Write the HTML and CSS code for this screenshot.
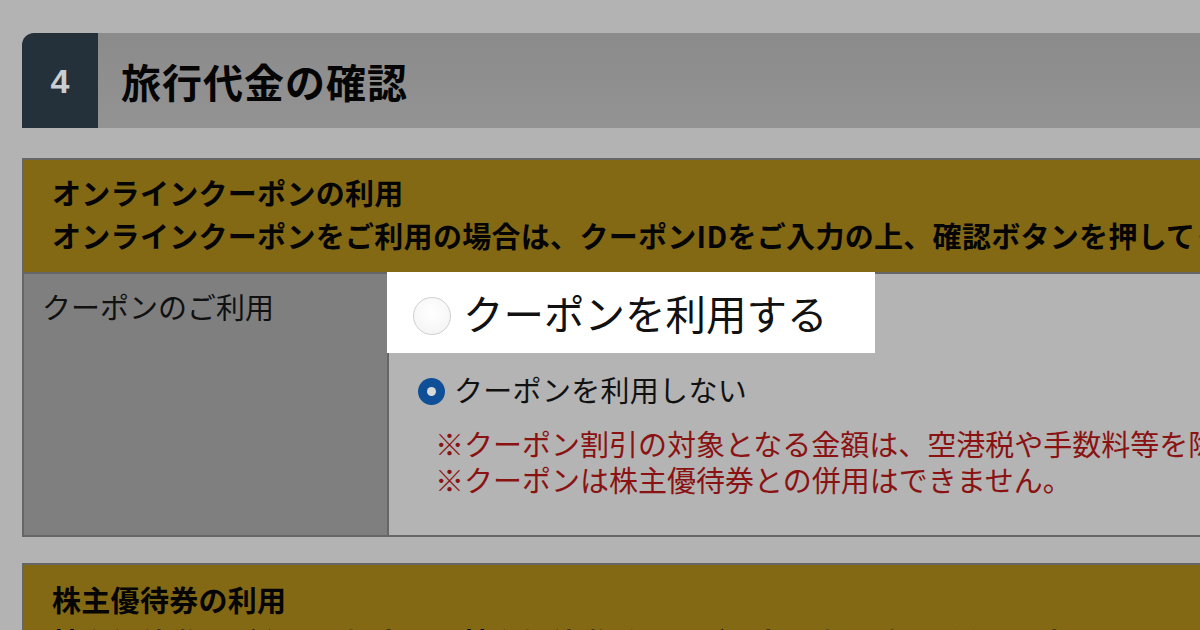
FILE: index.html
```html
<!DOCTYPE html>
<html lang="ja">
<head>
<meta charset="utf-8">
<title>旅行代金の確認</title>
<link rel="stylesheet" href="styles.css">
</head>
<body>
<div class="page">
  <div class="step-header">
    <div class="step-num">4</div>
    <div class="step-title">旅行代金の確認</div>
  </div>

  <div class="section">
    <div class="sec-head">
      <div>オンラインクーポンの利用</div>
      <div>オンラインクーポンをご利用の場合は、クーポンIDをご入力の上、確認ボタンを押してください。</div>
    </div>
    <div class="row">
      <div class="row-label">クーポンのご利用</div>
      <div class="row-body">
        <div class="opt-highlight">
          <span class="radio-big"></span>
          <span class="opt-big-text">クーポンを利用する</span>
        </div>
        <div class="opt">
          <span class="radio-on"></span>
          <span class="opt-text">クーポンを利用しない</span>
        </div>
        <div class="notes">
          <div>※クーポン割引の対象となる金額は、空港税や手数料等を除いた金額となります。</div>
          <div>※クーポンは株主優待券との併用はできません。</div>
        </div>
      </div>
    </div>
  </div>

  <div class="section section-2">
    <div class="sec-head sec-head-2">
      <div>株主優待券の利用</div>
      <div>株主優待券をご利用の場合は、株主優待券番号をご入力の上、確認ボタンを押してください。</div>
    </div>
  </div>
</div>
</body>
</html>
```

FILE: styles.css
```css
html, body {
  margin: 0;
  padding: 0;
}
body {
  width: 1200px;
  height: 630px;
  overflow: hidden;
  background: #b3b3b3;
  font-family: "Noto Sans CJK JP", "Noto Sans", sans-serif;
  color: #111;
}
.page {
  padding: 33px 0 0 22px;
  width: 1300px;
}
.step-header {
  display: flex;
  height: 95px;
}
.step-num {
  width: 76px;
  background: #25313a;
  border-top-left-radius: 12px;
  color: #c9ced2;
  font-family: "Liberation Sans", Arial, sans-serif;
  font-weight: 700;
  font-size: 34px;
  display: flex;
  align-items: center;
  justify-content: center;
  padding-top: 2px;
  box-sizing: border-box;
}
.step-title {
  flex: 1;
  background: linear-gradient(#8b8b8b, #939393);
  display: flex;
  align-items: center;
  padding-left: 23px;
  font-size: 40px;
  font-weight: 700;
  color: #050505;
  letter-spacing: 1px;
}
.section {
  margin-top: 30px;
  border: 2px solid #666;
  border-right: none;
  white-space: nowrap;
}
.sec-head {
  background: #846914;
  padding: 11px 0 15px 28px;
  font-size: 29px;
  letter-spacing: 0.3px;
  font-weight: 700;
  line-height: 43px;
  color: #050505;
}
.row {
  display: flex;
  border-top: 2px solid #666;
}
.row-label {
  flex: none;
  background: #7f7f7f;
  border-right: 2px solid #666;
  padding: 12px 0 0 18px;
  box-sizing: border-box;
  width: 365px;
  font-size: 29px;
  line-height: 40px;
  color: #111;
}
.row-body {
  flex: 1;
  background: #b4b4b4;
  padding-bottom: 38px;
}
.opt-highlight {
  position: relative;
  z-index: 1;
  margin: -2px 0 0 -2px;
  width: 488px;
  height: 81px;
  background: #fff;
  display: flex;
  align-items: center;
  padding-left: 26px;
  box-sizing: border-box;
  gap: 12px;
}
.radio-big {
  width: 38px;
  height: 38px;
  border-radius: 50%;
  border: 1.5px solid #cfcfcf;
  background: radial-gradient(circle at 50% 40%, #fff, #f2f2f2);
  box-sizing: border-box;
  flex: none;
  margin-top: 6px;
}
.opt-big-text {
  font-size: 40.5px;
  line-height: 50px;
  color: #111;
}
.opt {
  display: flex;
  align-items: center;
  margin-top: 17px;
  height: 38px;
  padding-left: 29px;
  gap: 9px;
}
.radio-on {
  width: 27px;
  height: 27px;
  border-radius: 50%;
  background: #0e4f98;
  box-sizing: border-box;
  flex: none;
  position: relative;
  margin-top: 4px;
}
.radio-on::after {
  content: "";
  position: absolute;
  left: 9px;
  top: 9px;
  width: 9px;
  height: 9px;
  border-radius: 50%;
  background: #d9d9d9;
}
.opt-text {
  font-size: 29px;
  letter-spacing: 0.3px;
  line-height: 38px;
  color: #111;
}
.notes {
  margin-top: 17px;
  padding-left: 46px;
  font-size: 29px;
  line-height: 36px;
  color: #8a1212;
}
.section-2 {
  margin-top: 26px;
}
.sec-head-2 {
  padding-top: 13px;
}
```
